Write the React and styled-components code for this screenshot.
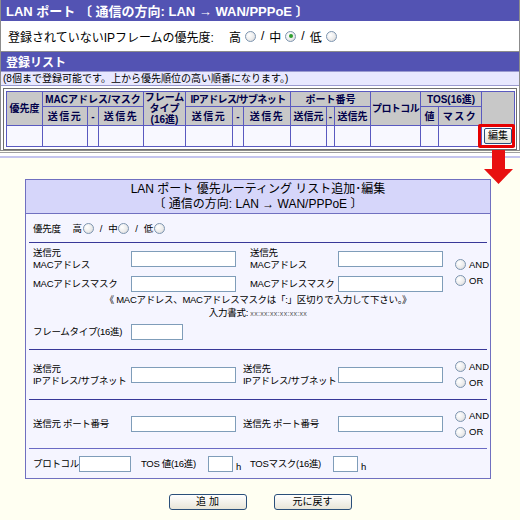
import { Fragment } from 'react';
import styled, { createGlobalStyle, css } from 'styled-components';

const GlobalStyle = createGlobalStyle`
  html, body {
    margin: 0;
    padding: 0;
  }
  body {
    width: 520px;
    height: 520px;
    overflow: hidden;
    background: #fffff2;
    color: #000;
    font-family: "Liberation Sans", "Noto Sans CJK JP", sans-serif;
  }
`;

const LEVELS = ['高', '中', '低'];

const LIST_COLS = [36, 45, 11, 45, 42, 47, 11, 47, 36, 8, 36, 50, 18, 43, 33];

const Choices = ({ checked, size, gap }) => (
  <ChoiceList $gap={gap}>
    {LEVELS.map((label, idx) => (
      <Fragment key={label}>
        {idx > 0 && <span>/</span>}
        <ChoiceItem $gap={gap}>
          {label}
          <Radio $size={size} $checked={checked === label} />
        </ChoiceItem>
      </Fragment>
    ))}
  </ChoiceList>
);

const AndOr = () => (
  <RadioStack>
    <RadioLabel>
      <Radio $size={11} />
      AND
    </RadioLabel>
    <RadioLabel>
      <Radio $size={11} />
      OR
    </RadioLabel>
  </RadioStack>
);

export default function App() {
  return (
    <Page>
      <GlobalStyle />
      <TopSection>
        <TitleBar $h={21} $size={13}>
          LAN ポート 〔 通信の方向: LAN → WAN/PPPoE 〕
        </TitleBar>
        <PriorityRow>
          <span>登録されていないIPフレームの優先度:</span>
          <Choices checked="中" size={11} gap={5} />
        </PriorityRow>
        <TitleBar $h={19} $size={12}>
          登録リスト
        </TitleBar>
        <ListNote>(8個まで登録可能です。上から優先順位の高い順番になります。)</ListNote>
        <TableFrame>
          <ListTable>
            <colgroup>
              {LIST_COLS.map((w, idx) => (
                <col key={idx} style={{ width: w }} />
              ))}
            </colgroup>
            <thead>
              <HeadRow $h={14}>
                <HeadCell rowSpan={2}>優先度</HeadCell>
                <HeadCell colSpan={3}>MACアドレス/マスク</HeadCell>
                <HeadCell rowSpan={2}>
                  フレーム
                  <br />
                  タイプ
                  <br />
                  (16進)
                </HeadCell>
                <HeadCell colSpan={3} $tight>IPアドレス/サブネット</HeadCell>
                <HeadCell colSpan={3}>ポート番号</HeadCell>
                <HeadCell rowSpan={2} $tight>プロトコル</HeadCell>
                <HeadCell colSpan={2}>TOS(16進)</HeadCell>
                <HeadCell rowSpan={2} />
              </HeadRow>
              <HeadRow $h={17}>
                <HeadCell $spaced>送信元</HeadCell>
                <HeadCell>-</HeadCell>
                <HeadCell $spaced>送信先</HeadCell>
                <HeadCell $spaced>送信元</HeadCell>
                <HeadCell>-</HeadCell>
                <HeadCell $spaced>送信先</HeadCell>
                <HeadCell>送信元</HeadCell>
                <HeadCell>-</HeadCell>
                <HeadCell>送信先</HeadCell>
                <HeadCell>値</HeadCell>
                <HeadCell $spaced>マスク</HeadCell>
              </HeadRow>
            </thead>
            <tbody>
              <tr>
                {LIST_COLS.slice(0, 14).map((_, idx) => (
                  <DataCell key={idx} />
                ))}
                <DataCell>
                  <SmallButton>編集</SmallButton>
                </DataCell>
              </tr>
            </tbody>
          </ListTable>
        </TableFrame>
      </TopSection>
      <Separator />

      <FormArea>
        <Panel>
          <PanelHeader>
            LAN ポート 優先ルーティング リスト追加･編集
            <br />
            〔 通信の方向: LAN → WAN/PPPoE 〕
          </PanelHeader>
          <PanelBody>
            <Section $h={28}>
              <InlineRow>
                <span>優先度</span>
                <Choices size={11} gap={6} />
              </InlineRow>
            </Section>

            <Section $h={106} $top>
              <PairGrid>
                <Label>
                  送信元
                  <br />
                  MACアドレス
                </Label>
                <TextBox />
                <Label>
                  送信先
                  <br />
                  MACアドレス
                </Label>
                <TextBox />
                <AndOrCell $span={2}>
                  <AndOr />
                </AndOrCell>
                <Label>MACアドレスマスク</Label>
                <TextBox />
                <Label>MACアドレスマスク</Label>
                <TextBox />
              </PairGrid>
              <FormatNote>
                《 MACアドレス、MACアドレスマスクは「:」区切りで入力して下さい。》
                <br />
                入力書式: <Sample>xx:xx:xx:xx:xx:xx</Sample>
              </FormatNote>
              <SingleRow>
                <Label>フレームタイプ(16進)</Label>
                <TextBox $w={52} />
              </SingleRow>
            </Section>

            <Section $h={49}>
              <PairGrid $wide>
                <Label>
                  送信元
                  <br />
                  IPアドレス/サブネット
                </Label>
                <TextBox />
                <Label>
                  送信先
                  <br />
                  IPアドレス/サブネット
                </Label>
                <TextBox />
                <AndOrCell>
                  <AndOr />
                </AndOrCell>
              </PairGrid>
            </Section>

            <Section $h={48} $line="#6a6ac4">
              <PairGrid $wide>
                <Label>送信元 ポート番号</Label>
                <TextBox />
                <Label>送信先 ポート番号</Label>
                <TextBox />
                <AndOrCell>
                  <AndOr />
                </AndOrCell>
              </PairGrid>
            </Section>

            <Section $h={29} $last>
              <ProtocolGrid>
                <Label>プロトコル</Label>
                <TextBox $w={52} />
                <Label>TOS 値(16進)</Label>
                <UnitField>
                  <TextBox $w={25} />
                  <span>h</span>
                </UnitField>
                <Label>TOSマスク(16進)</Label>
                <UnitField>
                  <TextBox $w={25} />
                  <span>h</span>
                </UnitField>
              </ProtocolGrid>
            </Section>
          </PanelBody>
        </Panel>

        <ButtonRow>
          <FormButton>追 加</FormButton>
          <FormButton>元に戻す</FormButton>
        </ButtonRow>
      </FormArea>

      <EditHighlight />
      <EditArrow viewBox="0 0 30 35" width="30" height="35">
        <path d="M8 0 H21 V19 H29 L14.5 34 L0 19 H8 Z" fill="#e81010" />
      </EditArrow>
    </Page>
  );
}

const Page = styled.div`
  position: relative;
  width: 520px;
  height: 520px;
`;

const TopSection = styled.div`
  background: #fff;
  border: 1px solid #8c8c8c;
  border-top: none;
`;

const TitleBar = styled.div`
  height: ${(p) => p.$h}px;
  padding-left: 5px;
  background: #5353b3;
  color: #fff;
  font-size: ${(p) => p.$size}px;
  font-weight: bold;
  white-space: nowrap;

  display: flex;
  align-items: center;
`;

const PriorityRow = styled.div`
  height: 30px;
  padding-left: 7px;
  border-bottom: 1px solid #8c8c8c;
  font-size: 12px;
  white-space: nowrap;

  display: flex;
  align-items: center;
  gap: 15px;
`;

const ChoiceList = styled.span`
  display: inline-flex;
  align-items: center;
  gap: ${(p) => p.$gap}px;
`;

const ChoiceItem = styled.span`
  display: inline-flex;
  align-items: center;
  gap: ${(p) => (p.$gap > 5 ? 1 : 4)}px;
`;

const Radio = styled.span`
  box-sizing: border-box;
  width: ${(p) => p.$size}px;
  height: ${(p) => p.$size}px;
  border-radius: 50%;
  border: 1px solid #7d95b0;
  background: radial-gradient(circle at 35% 35%, #ffffff 0%, #ececec 55%, #cfcfcf 100%);
  position: relative;
  flex-shrink: 0;

  ${(p) =>
    p.$checked &&
    css`
      &::after {
        content: '';
        position: absolute;
        inset: 2.5px;
        border-radius: 50%;
        background: #2e9e2e;
      }
    `}
`;

const ListNote = styled.div`
  height: 13px;
  padding-left: 2px;
  background: #e8e8ff;
  border-top: 1px solid #9a9ad0;
  border-bottom: 1px solid #9a9ad0;
  font-size: 10px;
  line-height: 13px;
  white-space: nowrap;
`;

const TableFrame = styled.div`
  margin: 2px 2px 0;
  padding: 2px;
  border: 1px solid #6e6e6e;
`;

const ListTable = styled.table`
  width: 508px;
  table-layout: fixed;
  border-collapse: collapse;
  font-size: 10px;
`;

const HeadRow = styled.tr`
  height: ${(p) => p.$h}px;
`;

const HeadCell = styled.th`
  padding: 0;
  border: 1px solid #5a5ac0;
  background: #c8c8c8;
  color: #00004a;
  font-weight: bold;
  line-height: 11px;
  text-align: center;
  white-space: nowrap;
  overflow: hidden;
  letter-spacing: ${(p) => (p.$tight ? '-0.6px' : p.$spaced ? '1.5px' : '0')};
`;

const DataCell = styled.td`
  height: 20px;
  padding: 0;
  border: 1px solid #5a5ac0;
  background: #f8f8ff;
  text-align: center;
`;

const SmallButton = styled.button`
  width: 28px;
  height: 16px;
  padding: 0;
  border: 1px solid #2a4f7a;
  border-radius: 2px;
  background: linear-gradient(#ffffff, #e6e3d6);
  font-family: "Liberation Sans", "Noto Sans CJK JP", sans-serif;
  font-size: 10px;
  line-height: 14px;
  color: #000;
`;

const Separator = styled.div`
  height: 3px;
  background: #fff;
  border-top: 1px solid #a0a0a0;
  border-bottom: 2px solid #c4c4ee;
  margin-top: 1px;
`;

const FormArea = styled.div`
  padding: 21px 0 0 25px;
`;

const Panel = styled.div`
  box-sizing: border-box;
  width: 466px;
  border: 1px solid #7070c0;
  background: #f5f5ff;
`;

const PanelHeader = styled.div`
  height: 33px;
  border-bottom: 1px solid #7070c0;
  background: #d6d6fa;
  font-size: 12px;
  line-height: 15px;
  text-align: center;
  white-space: nowrap;

  display: flex;
  flex-direction: column;
  justify-content: center;
`;

const PanelBody = styled.div`
  padding: 0 3px;
  font-size: 9.5px;
  letter-spacing: -0.3px;
`;

const Section = styled.div`
  box-sizing: content-box;
  height: ${(p) => p.$h}px;
  padding-left: 4px;
  border-bottom: ${(p) => (p.$last ? 'none' : `1px solid ${p.$line || '#383898'}`)};

  display: flex;
  flex-direction: column;
  justify-content: ${(p) => (p.$top ? 'flex-start' : 'center')};
  ${(p) =>
    p.$top &&
    css`
      padding-top: 4px;
      height: ${p.$h - 4}px;
    `}
`;

const InlineRow = styled.div`
  display: flex;
  align-items: center;
  gap: 12px;
  white-space: nowrap;
`;

const PairGrid = styled.div`
  display: grid;
  grid-template-columns: ${(p) =>
    p.$wide ? '98px 112px 95px 117px auto' : '98px 119px 88px 117px auto'};
  row-gap: 5px;
  align-items: center;
`;

const Label = styled.div`
  line-height: 12px;
  white-space: nowrap;
`;

const TextBox = styled.input.attrs({ type: 'text' })`
  box-sizing: border-box;
  width: ${(p) => p.$w || 105}px;
  height: 16px;
  margin: 0;
  padding: 0 2px;
  border: 1px solid #7f9db9;
  background: #fff;
  font-size: 10px;
`;

const AndOrCell = styled.div`
  grid-row: span ${(p) => p.$span || 1};
  align-self: center;
  padding-top: ${(p) => (p.$span ? 6 : 0)}px;
`;

const RadioStack = styled.div`
  display: flex;
  flex-direction: column;
  gap: 4px;
`;

const RadioLabel = styled.label`
  display: flex;
  align-items: center;
  gap: 3px;
  line-height: 12px;
  letter-spacing: 0;
`;

const FormatNote = styled.div`
  margin-top: 1px;
  margin-left: -4px;
  line-height: 13px;
  text-align: center;
  white-space: nowrap;
`;

const Sample = styled.span`
  font-size: 7px;
  color: #555;
  letter-spacing: 0.3px;
`;

const SingleRow = styled.div`
  margin-top: 4px;
  display: grid;
  grid-template-columns: 98px auto;
  align-items: center;
`;

const ProtocolGrid = styled.div`
  display: grid;
  grid-template-columns: 46px 62px 67px 42px 83px auto;
  align-items: center;
`;

const UnitField = styled.div`
  display: flex;
  align-items: flex-end;
  gap: 3px;
  line-height: 10px;
`;

const ButtonRow = styled.div`
  width: 470px;
  margin-top: 15px;

  display: flex;
  justify-content: center;
  gap: 27px;
`;

const FormButton = styled.button`
  width: 78px;
  height: 16px;
  padding: 0;
  border: 1px solid #2a4f7a;
  border-radius: 3px;
  background: linear-gradient(#ffffff, #e8e5d8);
  font-family: "Liberation Sans", "Noto Sans CJK JP", sans-serif;
  font-size: 10px;
  line-height: 14px;
  color: #000;
`;

const EditHighlight = styled.div`
  position: absolute;
  left: 478px;
  top: 124px;
  width: 37px;
  height: 24px;
  box-sizing: border-box;
  border: 3px solid #e60000;
  border-radius: 2px;
`;

const EditArrow = styled.svg`
  position: absolute;
  left: 484px;
  top: 150px;
`;
